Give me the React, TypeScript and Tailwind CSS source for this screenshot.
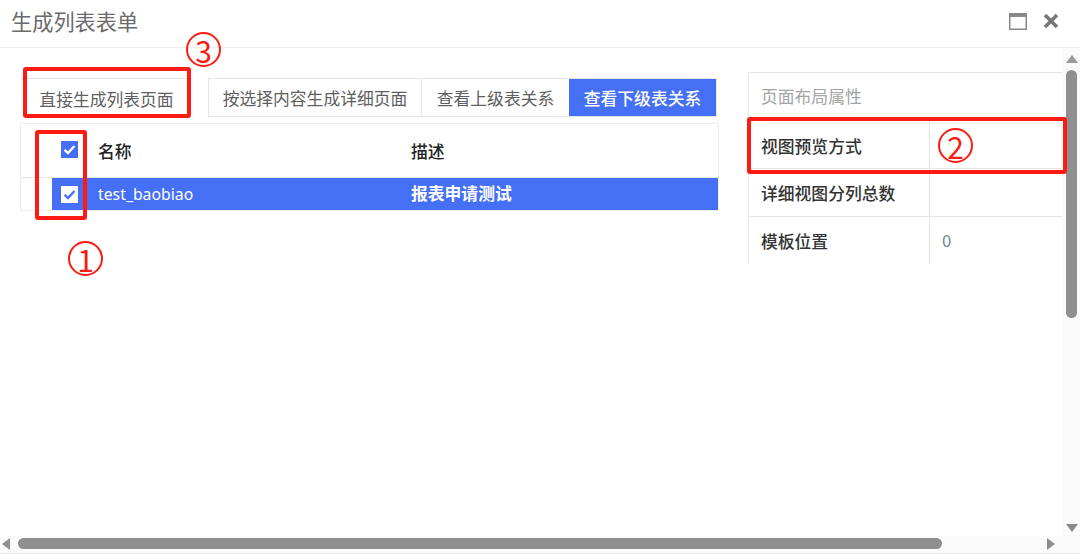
const cjk = "font-['Noto_Sans_CJK_SC','Noto_Sans',sans-serif]"

function CheckBox({ inverted }: { inverted?: boolean }) {
  return (
    <span
      className={
        "flex h-[17px] w-[17px] items-center justify-center " +
        (inverted ? "bg-white" : "bg-[#4570f5]")
      }
    >
      <svg width="15" height="15" viewBox="0 0 13 13" fill="none">
        <path
          d="M2.2 6.8 L5.2 9.6 L10.8 3.4"
          stroke={inverted ? "#4570f5" : "#ffffff"}
          strokeWidth="2"
        />
      </svg>
    </span>
  )
}

function PropRow({ label, value, lift }: { label: string; value?: string; lift?: boolean }) {
  return (
    <div className="flex h-[48px] border-t border-[#e6e6e6]">
      <div
        className={
          "flex w-[181px] items-center border-r border-[#e6e6e6] pl-[12px] font-medium text-[#333] " +
          (lift ? "pt-[2px]" : "pt-[5px]")
        }
      >
        {label}
      </div>
      <div className="flex flex-1 items-center pl-[12px] pt-[1px] text-[#7a8790]">{value}</div>
    </div>
  )
}

function Circled({ digit, className }: { digit: string; className: string }) {
  return (
    <span
      className={
        "absolute flex h-[35px] w-[35px] items-center justify-center rounded-full border-2 border-[#fb1b13] text-[30px] leading-none text-[#fb1b13] " +
        className
      }
    >
      {digit}
    </span>
  )
}

export default function App() {
  return (
    <div className={"relative flex h-[554px] w-[1080px] flex-col overflow-hidden bg-white text-[16.8px] " + cjk}>
      <header className="flex h-[48px] shrink-0 items-center justify-between border-b border-[#eeeeee] pl-[11px] pr-[21px]">
        <span className="pb-[5px] text-[21.2px] leading-none text-[#6b6b6b]">生成列表表单</span>
        <div className="flex items-center gap-[16px] pb-[5px]">
          <svg width="18" height="17" viewBox="0 0 18 17" fill="none">
            <rect x="0.75" y="0.75" width="16.5" height="15.5" stroke="#888" strokeWidth="1.5" />
            <rect x="0.75" y="0.75" width="16.5" height="3.2" fill="#888" />
          </svg>
          <svg width="16" height="16" viewBox="0 0 16 16" fill="none">
            <path d="M2 2 L14 14 M14 2 L2 14" stroke="#777" strokeWidth="3.6" />
          </svg>
        </div>
      </header>

      <div className="flex min-h-0 flex-1">
        <main className="flex min-w-0 flex-1 pl-[20px]">
          <section className="w-[699px] shrink-0 pt-[30px]">
            <div className="flex h-[39px] items-stretch">
              <div className="flex w-[173px] items-center justify-center border-t border-[#e6e6e6] pt-[3px] text-[#5f5f5f]">
                直接生成列表页面
              </div>
              <div className="ml-[15px] flex h-[39px] items-stretch border border-[#e6e6e6] pt-[1px] text-[#5f5f5f]">
                <div className="-mt-[1px] flex w-[213px] items-center justify-center border-r border-[#e6e6e6] pt-[2px]">按选择内容生成详细页面</div>
                <div className="flex w-[147px] items-center justify-center pt-[1px]">查看上级表关系</div>
                <div className="-mt-[1px] flex w-[147px] items-center justify-center bg-[#4570f5] pt-[2px] font-medium text-white">查看下级表关系</div>
              </div>
            </div>
            <div className="mt-[6px] border border-[#eeeeee]">
              <div className="flex h-[53px] items-center">
                <div className="flex w-[77px] justify-end pb-[3px] pr-[20px]">
                  <CheckBox />
                </div>
                <div className="w-[313px] pt-[2px] font-medium text-[#222]">名称</div>
                <div className="pt-[2px] font-medium text-[#222]">描述</div>
              </div>
              <div className="flex h-[33px] border-t border-[#e6e6e6]">
                <div className="w-[31px] shrink-0" />
                <div className="flex flex-1 items-center bg-[#4570f5] text-white">
                  <div className="flex w-[46px] justify-end pr-[20px]">
                    <CheckBox inverted />
                  </div>
                  <div className="w-[313px] pt-[1px] font-['Noto_Sans',sans-serif] text-[15.8px]">test_baobiao</div>
                  <div className="font-bold">报表申请测试</div>
                </div>
              </div>
            </div>
          </section>

          <aside className="ml-[29px] mt-[24px] flex h-[192px] w-[314px] shrink-0 flex-col overflow-hidden border-l border-t border-[#e6e6e6]">
            <div className="flex h-[47px] shrink-0 items-center pl-[12px] text-[#a3a3a3]">页面布局属性</div>
            <PropRow label="视图预览方式" />
            <PropRow label="详细视图分列总数" lift />
            <PropRow label="模板位置" value="0" lift />
          </aside>
        </main>

        <div className="flex w-[17px] shrink-0 flex-col items-center bg-[#fbfbfb]">
          <svg className="mt-[7px] shrink-0" width="12" height="8" viewBox="0 0 12 8">
            <path d="M6 0 L12 8 L0 8 Z" fill="#9a9a9a" />
          </svg>
          <div className="mt-[7px] h-[248px] w-[11px] rounded-full bg-[#8f8f8f]" />
          <div className="flex-1" />
          <svg className="mb-[4px] shrink-0" width="12" height="8" viewBox="0 0 12 8">
            <path d="M6 8 L12 0 L0 0 Z" fill="#8a8a8a" />
          </svg>
        </div>
      </div>

      <div className="flex h-[18px] shrink-0 items-center border-b border-[#e4e4e4] bg-[#fbfbfb] pb-[2px]">
        <svg className="ml-[2px] shrink-0" width="8" height="12" viewBox="0 0 8 12">
          <path d="M0 6 L8 0 L8 12 Z" fill="#8f8f8f" />
        </svg>
        <div className="ml-[8px] h-[11px] w-[924px] rounded-full bg-[#8f8f8f]" />
        <svg className="ml-[105px] shrink-0" width="8" height="12" viewBox="0 0 8 12">
          <path d="M8 6 L0 0 L0 12 Z" fill="#8f8f8f" />
        </svg>
      </div>

      {/* red annotations drawn on top of the screenshot */}
      <div className="absolute left-[23px] top-[67px] h-[51px] w-[168px] rounded-[3px] border-4 border-[#fb1b13]" />
      <div className="absolute left-[35px] top-[130px] h-[90px] w-[52px] rounded-[3px] border-4 border-[#fb1b13]" />
      <div className="absolute left-[747px] top-[117px] h-[57px] w-[320px] rounded-[3px] border-4 border-[#fb1b13]" />
      <Circled digit="1" className="left-[68px] top-[241px]" />
      <Circled digit="3" className="left-[186px] top-[32px]" />
      <Circled digit="2" className="left-[938px] top-[128px]" />
    </div>
  )
}
